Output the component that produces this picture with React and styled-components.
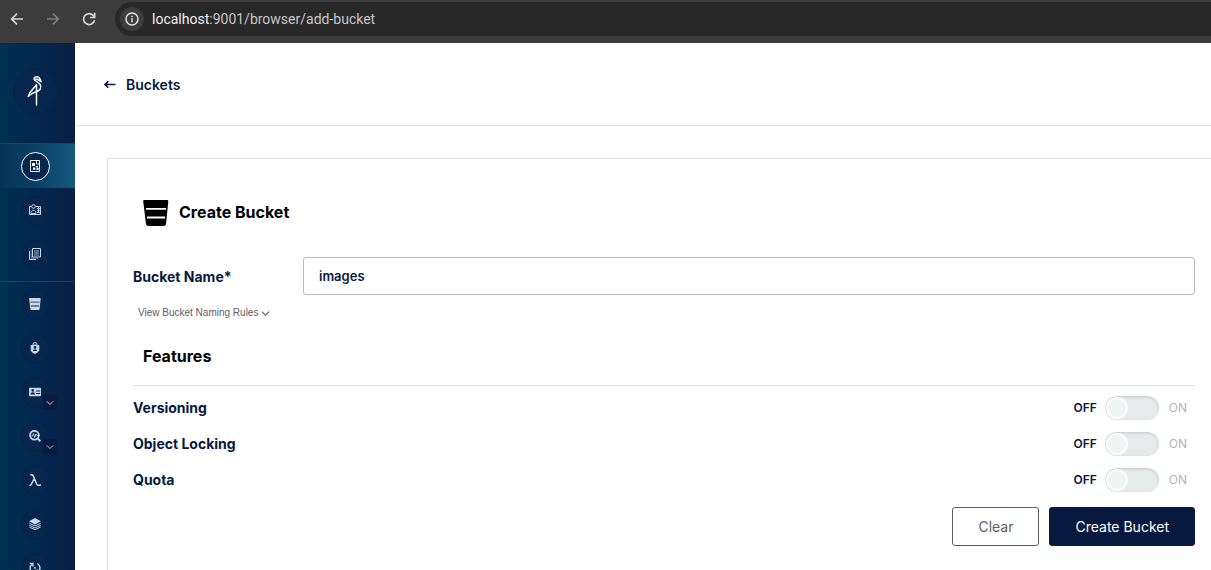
import React, { useState } from "react";
import styled, { createGlobalStyle } from "styled-components";

const GlobalStyle = createGlobalStyle`
  *, *::before, *::after { box-sizing: border-box; }
  body { margin: 0; background: #fff; font-family: Inter, "Liberation Sans", sans-serif; color: #07193e; }
  button, input { font-family: inherit; }
`;

const Window = styled.div`
  display: flex;
  flex-direction: column;
  height: 100vh;
  overflow: hidden;
`;

const BrowserBar = styled.div`
  display: flex;
  align-items: flex-start;
  flex: none;
  height: 43px;
  padding: 2px 0 0 8px;
  background: #3c3c3c;
`;

const BrowserButton = styled.button`
  display: flex;
  align-items: center;
  justify-content: center;
  width: 18px;
  height: 34px;
  margin-right: 18px;
  padding: 0;
  border: 0;
  background: none;
  color: ${(p) => (p.$dim ? "#7d7d7d" : "#d6d6d6")};
`;

const AddressBar = styled.div`
  display: flex;
  align-items: center;
  flex: 1;
  gap: 8px;
  height: 34px;
  padding-left: 5px;
  margin-left: -1px;
  border-radius: 17px 0 0 17px;
  background: #282828;
`;

const SiteInfo = styled.button`
  display: flex;
  align-items: center;
  justify-content: center;
  width: 24px;
  height: 24px;
  padding: 0;
  border: 0;
  border-radius: 50%;
  background: #3c3c3c;
  color: #e3e3e3;
`;

const Url = styled.span`
  font: 14px/20px Roboto, "Noto Sans", sans-serif;
  color: #c7c7c7;
`;

const Host = styled.span`
  color: #f0f0f0;
`;

const Shell = styled.div`
  display: flex;
  flex: 1;
  min-height: 0;
`;

const Sidebar = styled.nav`
  flex: none;
  width: 75px;
  overflow: hidden;
  background: linear-gradient(90deg, #00314f 0%, #03264f 50%, #0a1f44 100%);
`;

const LogoArea = styled.div`
  display: flex;
  align-items: center;
  height: 100px;
  padding: 0 0 4px 13px;
`;

const LogoCircle = styled.a`
  display: flex;
  align-items: center;
  justify-content: center;
  width: 45px;
  height: 45px;
  padding-right: 1px;
  border: 1px solid #04234b;
  border-radius: 50%;
  background: #06264e;
`;

const NavGroup = styled.ul`
  margin: 0;
  padding: 0 0 5px;
  border-top: 1px solid #13426b;
  list-style: none;
`;

const NavLink = styled.a`
  display: flex;
  align-items: center;
  position: relative;
  height: 44px;
  padding-left: 21px;
  color: #c9d6e6;
  background: ${(p) => (p.$active ? "linear-gradient(90deg, #053355 0%, #0a4166 50%, #145a7d 100%)" : "none")};
`;

const NavCircle = styled.span`
  display: flex;
  align-items: center;
  justify-content: center;
  width: 29px;
  height: 29px;
  padding-right: 1px;
  border: 1px solid ${(p) => (p.$active ? "#fff" : "#04234b")};
  border-radius: 50%;
  background: #06264e;
`;

const Expand = styled.span`
  display: flex;
  align-items: center;
  justify-content: center;
  position: absolute;
  left: 43px;
  top: 25px;
  width: 14px;
  height: 15px;
  border-radius: 2px;
  background: #081c42;
`;

const Main = styled.main`
  flex: 1;
  min-width: 0;
  background: #fff;
`;

const PageHeader = styled.header`
  display: flex;
  align-items: center;
  height: 83px;
  padding: 2px 0 0 28px;
  border-bottom: 1px solid #e2e2e2;
`;

const BackLink = styled.a`
  display: flex;
  align-items: center;
  gap: 9px;
  font-size: 14px;
  line-height: 20px;
  font-weight: 600;
  color: #07193e;
  text-decoration: none;
`;

const Card = styled.form`
  margin: 32px 0 0 32px;
  min-height: 100%;
  padding: 41px 16px 24px 25px;
  border: 1px solid #e2e2e2;
  border-right: 0;
  border-radius: 2px 0 0 0;
`;

const Title = styled.h1`
  display: flex;
  align-items: flex-start;
  gap: 10px;
  height: 26px;
  margin: 0;
  padding-left: 10px;
  font-size: 16px;
  line-height: 24px;
  font-weight: 700;
  color: #000;
`;

const Field = styled.div`
  display: flex;
  align-items: center;
  margin-top: 31px;
`;

const Label = styled.label`
  font-size: 14px;
  line-height: 20px;
  font-weight: 700;
  color: #07193e;
`;

const FieldLabel = styled(Label)`
  flex: none;
  width: 170px;
  padding-top: 2px;
`;

const TextInput = styled.input`
  flex: 1;
  min-width: 0;
  height: 38px;
  padding: 0 15px;
  border: 1px solid #b9b9b9;
  border-radius: 3px;
  outline: 0;
  background: #fff;
  font-size: 13px;
  font-weight: 600;
  color: #07193e;
`;

const RulesButton = styled.button`
  display: flex;
  align-items: center;
  gap: 3px;
  height: 16px;
  margin: 10px 0 0 5px;
  padding: 0;
  border: 0;
  background: none;
  font: 10px/16px "Liberation Sans", Arial, sans-serif;
  color: #5e5e5e;
`;

const SectionTitle = styled.h2`
  margin: 23px 0 0;
  padding: 0 10px 17px;
  border-bottom: 1px solid #e2e2e2;
  font-size: 16px;
  line-height: 24px;
  font-weight: 700;
  color: #000;
`;

const Features = styled.div`
  padding-top: 4px;
`;

const FeatureRow = styled.div`
  display: flex;
  align-items: center;
  justify-content: space-between;
  height: 36px;
`;

const SwitchGroup = styled.div`
  display: flex;
  align-items: center;
  padding-right: 8px;
  font-size: 12px;
  line-height: 16px;
`;

const State = styled.span`
  font-weight: ${(p) => (p.$on ? 600 : 400)};
  color: ${(p) => (p.$on ? "#07193e" : "#b4b4b4")};
`;

const Switch = styled.input`
  appearance: none;
  display: flex;
  align-items: center;
  width: 54px;
  height: 24px;
  margin: 0 10px 0 8px;
  padding: 1px;
  border-radius: 12px;
  background: #e6eaeb;
  box-shadow: inset 0 1px 3px rgba(0, 0, 0, 0.14);

  &::before {
    content: "";
    width: 22px;
    height: 22px;
    border: 2px solid #fff;
    border-radius: 50%;
    background: #f0f4f5;
  }

  &:checked {
    justify-content: flex-end;
    background: #4ccb92;
  }
`;

const Actions = styled.div`
  display: flex;
  justify-content: flex-end;
  gap: 10px;
  margin-top: 9px;
`;

const Button = styled.button`
  height: 39px;
  padding: 0 25px;
  border: 1px solid ${(p) => (p.$primary ? "#07193e" : "#5e5e5e")};
  border-radius: 3px;
  background: ${(p) => (p.$primary ? "#07193e" : "#fff")};
  font-size: 14px;
  line-height: 20px;
  color: ${(p) => (p.$primary ? "#fff" : "#5e5e5e")};
`;

const Chevron = ({ size = 8 }) => (
  <svg width={size} height={size} viewBox="0 0 8 8" fill="none" stroke="currentColor" strokeWidth=".9">
    <path d="M.8 2.3 4 5.500l3.200-3.200" />
  </svg>
);

const BucketIcon = ({ size }) => (
  <svg width={size} height={size} viewBox="0 0 26 26" fill="currentColor" fillRule="evenodd">
    <path d="M1.400 0h22.700q1.300 0 1.200 1.300L23 24.300Q22.700 26 21 26H5q-1.700 0-2-1.700L.2 1.300Q.1 0 1.400 0ZM3 8v1.800h20V8ZM4 16.500v2h18v-2Z" />
  </svg>
);

const Small = ({ children, ...rest }) => (
  <svg width="12" height="12" viewBox="0 0 12 12" fill="none" stroke="currentColor" {...rest}>
    {children}
  </svg>
);

const ObjectBrowserIcon = () => (
  <Small color="#fff">
    <path d="M1.500.500h9v11h-9Z" />
    <path d="M3 3h3v3H3ZM4 7.500h2.300v2.300H4ZM7 6h2v1.500H7ZM7.500 8h2v2h-2Z" fill="currentColor" stroke="none" />
    <path d="M7.500 1v3h3" strokeWidth=".9" />
  </Small>
);

const AccessKeysIcon = () => (
  <Small>
    <path d="M2.500 2.500h-2v8h11v-8h-5" />
    <circle cx="4.500" cy="2.500" r="1.800" />
    <path d="M2 9.500V7.800l1.500-1.500h2L7 7.800v1.700H2M8 4.500h3M8 6.500h3M8 8.500h3M9.500 3v6" strokeWidth=".9" />
  </Small>
);

const DocumentationIcon = () => (
  <Small>
    <path d="M3.500.500h8v8.500h-8ZM.500 3v8.500H7" />
    <path d="M5 3h5M5 5h5M5 7h5" strokeWidth=".8" />
    <path d="M2 2v8.300h7" strokeWidth=".5" />
  </Small>
);

const PoliciesIcon = () => (
  <Small>
    <path d="M4 3V2q0-1.400 2-1.400T8 2v1" />
    <path fillRule="evenodd" fill="currentColor" stroke="none" d="M1.700 3.300 6 2.400l4.300.9v5Q9.800 10.600 6 12 2.200 10.600 1.700 8.300ZM6 4a1.400 1.400 0 1 0 0 2.800A1.400 1.400 0 0 0 6 4ZM3.900 9h4.200q-.2-1.700-2.100-1.700T3.900 9Z" />
  </Small>
);

const IdentityIcon = () => (
  <Small>
    <path fillRule="evenodd" fill="currentColor" stroke="none" d="M.8 1.800h10.400q.8 0 .8.800v6.800q0 .8-.8.800H.8q-.8 0-.8-.8V2.600q0-.8.8-.8ZM3.700 3.100a1.300 1.300 0 1 0 0 2.600 1.300 1.300 0 0 0 0-2.600ZM1.500 8.500h4.400Q5.700 6.300 3.700 6.300T1.500 8.500ZM7 4.600v1h4v-1ZM7 7v1h4V7Z" />
  </Small>
);

const MonitoringIcon = () => (
  <Small>
    <circle cx="5.400" cy="5.200" r="4.400" strokeWidth="1.700" />
    <path d="m8.400 8.200 3 3" strokeWidth="2" />
    <path d="M2.500 6h1l1-2.300 1.200 3.800L7 4l.8 1.500H11" strokeWidth=".9" />
  </Small>
);

const EventsIcon = () => (
  <Small strokeWidth="1.500">
    <path d="M1.200.700h1.300q1.200 0 1.700 1.200L7.700 10q.6 1.300 1.700 1.300h1.300q.8 0 .8-1M5.400 4.500l-3.300 6.200q-.4.700-1.800.7" />
  </Small>
);

const TieringIcon = () => (
  <Small>
    <path d="m6 0 6 3.200-6 3.200-6-3.200Z" fill="currentColor" stroke="none" />
    <path d="M.3 5.200 6 8l5.700-2.800M.3 7.200 6 10l5.700-2.800M.3 9 6 11.700 11.700 9" strokeWidth="1" />
  </Small>
);

const ReplicationIcon = () => (
  <Small strokeWidth="1.400">
    <path d="M3.700 10.500A5 5 0 0 1 3.300 2M8.300 1.500a5 5 0 0 1 .5 8.500M.7 1.400h3.200v3.200M11.200 10.600h-3v-3" />
    <circle cx="6" cy="6" r=".9" fill="currentColor" stroke="none" />
  </Small>
);

const StorkLogo = () => (
  <svg width="16" height="32" viewBox="0 0 16 32" fill="none" stroke="#f1f4f8" strokeWidth="1.500" strokeLinejoin="round" strokeLinecap="round">
    <path d="M7.800 5.200Q6.600 4.200 7.300 2.900 8 1.600 10 1.700q2.500.3 3.500 3.300l.5 1.500M8.200 4.700q.8-1 2.300-.3L14 6.500" />
    <path d="M7.800 5.200 12.800 9q1.800 2.500.5 5-1.300 2-4.800 3L5 18.500l-3.800 3L3 17.500l6.500-7.700V30" />
  </svg>
);

const primaryNav = [
  { label: "Object Browser", icon: <ObjectBrowserIcon />, active: true },
  { label: "Access Keys", icon: <AccessKeysIcon /> },
  { label: "Documentation", icon: <DocumentationIcon /> },
];

const adminNav = [
  { label: "Buckets", icon: <BucketIcon size={12} /> },
  { label: "Policies", icon: <PoliciesIcon /> },
  { label: "Identity", icon: <IdentityIcon />, expandable: true },
  { label: "Monitoring", icon: <MonitoringIcon />, expandable: true },
  { label: "Events", icon: <EventsIcon /> },
  { label: "Tiering", icon: <TieringIcon /> },
  { label: "Site Replication", icon: <ReplicationIcon /> },
];

const NavList = ({ items }) => (
  <NavGroup>
    {items.map((item) => (
      <li key={item.label}>
        <NavLink href="#" aria-label={item.label} $active={item.active}>
          <NavCircle $active={item.active}>{item.icon}</NavCircle>
          {item.expandable && (
            <Expand>
              <Chevron />
            </Expand>
          )}
        </NavLink>
      </li>
    ))}
  </NavGroup>
);

const Feature = ({ id, label }) => {
  const [on, setOn] = useState(false);
  return (
    <FeatureRow>
      <Label htmlFor={id}>{label}</Label>
      <SwitchGroup>
        <State $on={!on}>OFF</State>
        <Switch type="checkbox" role="switch" id={id} checked={on} onChange={(e) => setOn(e.target.checked)} />
        <State $on={on}>ON</State>
      </SwitchGroup>
    </FeatureRow>
  );
};

export default function App() {
  const [name, setName] = useState("images");
  return (
    <Window>
      <GlobalStyle />
      <BrowserBar>
        <BrowserButton aria-label="Back">
          <svg width="14" height="14" viewBox="0 0 14 14" fill="none" stroke="currentColor" strokeWidth="1.700">
            <path d="M13 7H2M7 1.700 1.700 7 7 12.300" />
          </svg>
        </BrowserButton>
        <BrowserButton aria-label="Forward" $dim>
          <svg width="14" height="14" viewBox="0 0 14 14" fill="none" stroke="currentColor" strokeWidth="1.700">
            <path d="M1 7h11M7 1.700 12.300 7 7 12.300" />
          </svg>
        </BrowserButton>
        <BrowserButton aria-label="Reload">
          <svg width="14" height="14" viewBox="0 0 14 14" fill="none" stroke="currentColor" strokeWidth="1.700">
            <path d="M12.500 8.300A5.500 5.500 0 1 1 11.300 3.500L12.700 5" />
            <path d="M12.700.800V5.500H8" />
          </svg>
        </BrowserButton>
        <AddressBar>
          <SiteInfo aria-label="Site information">
            <svg width="14" height="14" viewBox="0 0 14 14" fill="none" stroke="currentColor" strokeWidth="1.500">
              <circle cx="7" cy="7" r="6" />
              <path d="M7 6.200v4M7 3.700v1.500" />
            </svg>
          </SiteInfo>
          <Url>
            <Host>localhost</Host>:9001/browser/add-bucket
          </Url>
        </AddressBar>
      </BrowserBar>
      <Shell>
        <Sidebar>
          <LogoArea>
            <LogoCircle href="#" aria-label="Home">
              <StorkLogo />
            </LogoCircle>
          </LogoArea>
          <NavList items={primaryNav} />
          <NavList items={adminNav} />
        </Sidebar>
        <Main>
          <PageHeader>
            <BackLink href="#">
              <svg width="14" height="14" viewBox="0 0 14 14" fill="none" stroke="currentColor" strokeWidth="1.600">
                <path d="M12.500 6.500H2M5.300 3.300 2 6.500l3.300 3.200" />
              </svg>
              Buckets
            </BackLink>
          </PageHeader>
          <Card onSubmit={(e) => e.preventDefault()}>
            <Title>
              <BucketIcon size={26} />
              Create Bucket
            </Title>
            <Field>
              <FieldLabel htmlFor="bucket-name">Bucket Name*</FieldLabel>
              <TextInput id="bucket-name" value={name} onChange={(e) => setName(e.target.value)} />
            </Field>
            <RulesButton type="button">
              View Bucket Naming Rules
              <Chevron size={9} />
            </RulesButton>
            <SectionTitle>Features</SectionTitle>
            <Features>
              <Feature id="versioning" label="Versioning" />
              <Feature id="locking" label="Object Locking" />
              <Feature id="quota" label="Quota" />
            </Features>
            <Actions>
              <Button type="button" onClick={() => setName("")}>Clear</Button>
              <Button type="submit" $primary>Create Bucket</Button>
            </Actions>
          </Card>
        </Main>
      </Shell>
    </Window>
  );
}
